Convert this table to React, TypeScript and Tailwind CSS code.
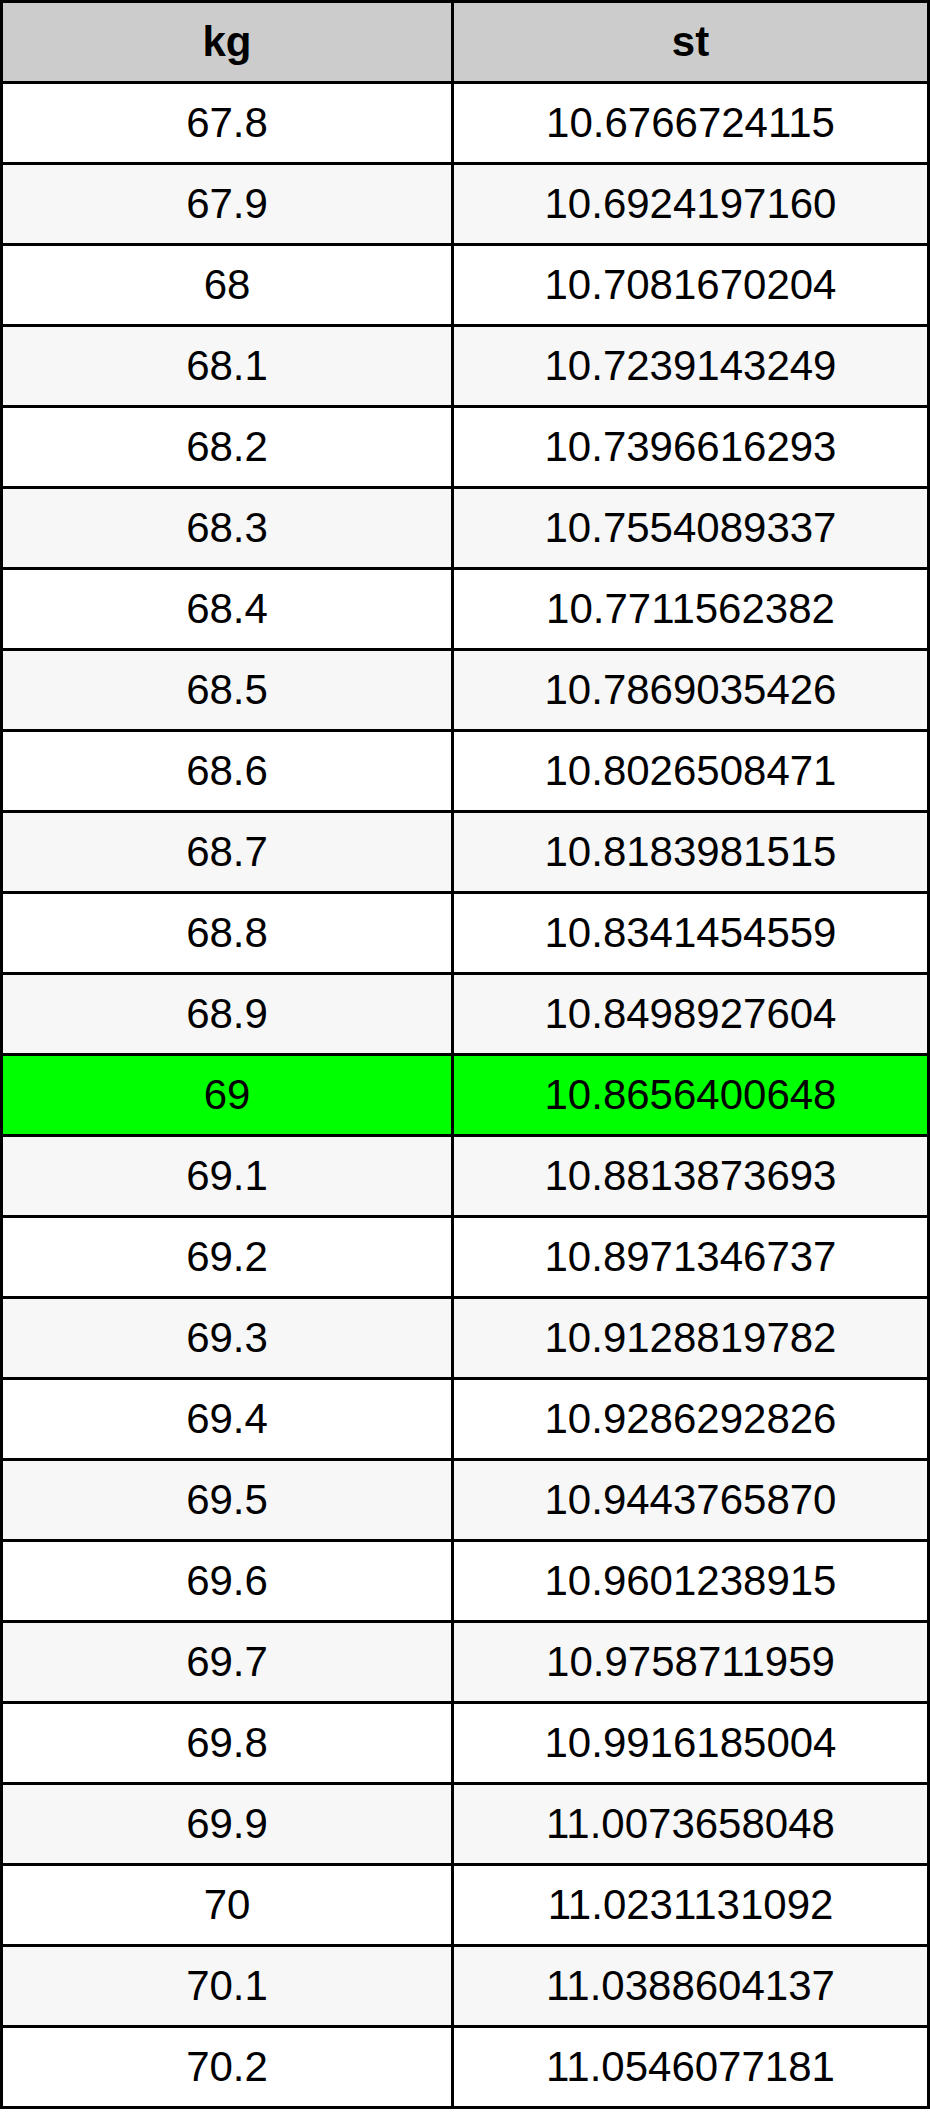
import React from "react";

const ROWS: [string, string][] = [
  ["67.8", "10.6766724115"],
  ["67.9", "10.6924197160"],
  ["68", "10.7081670204"],
  ["68.1", "10.7239143249"],
  ["68.2", "10.7396616293"],
  ["68.3", "10.7554089337"],
  ["68.4", "10.7711562382"],
  ["68.5", "10.7869035426"],
  ["68.6", "10.8026508471"],
  ["68.7", "10.8183981515"],
  ["68.8", "10.8341454559"],
  ["68.9", "10.8498927604"],
  ["69", "10.8656400648"],
  ["69.1", "10.8813873693"],
  ["69.2", "10.8971346737"],
  ["69.3", "10.9128819782"],
  ["69.4", "10.9286292826"],
  ["69.5", "10.9443765870"],
  ["69.6", "10.9601238915"],
  ["69.7", "10.9758711959"],
  ["69.8", "10.9916185004"],
  ["69.9", "11.0073658048"],
  ["70", "11.0231131092"],
  ["70.1", "11.0388604137"],
  ["70.2", "11.0546077181"],
];

const HIGHLIGHT = "69";

export default function App() {
  return (
    <div className="w-[930px] bg-white text-black font-['Liberation_Sans',Arial,sans-serif] text-[42px] leading-none">
      <div className="border-l-[3px] border-t-[3px] border-black">
        {/* Header */}
        <div className="flex h-[81px] bg-[#cccccc] font-bold">
          <div className="w-[451px] flex items-center justify-center border-r-[3px] border-b-[3px] border-black">kg</div>
          <div className="flex-1 flex items-center justify-center border-r-[3px] border-b-[3px] border-black">st</div>
        </div>

        {ROWS.map(([kg, st], i) => {
          const bg = kg === HIGHLIGHT ? "bg-[#00ff00]" : i % 2 === 0 ? "bg-white" : "bg-[#f7f7f7]";
          return (
            <div key={kg} className={`flex h-[81px] ${bg}`}>
              <div className="w-[451px] flex items-center justify-center border-r-[3px] border-b-[3px] border-black">{kg}</div>
              <div className="flex-1 flex items-center justify-center border-r-[3px] border-b-[3px] border-black">{st}</div>
            </div>
          );
        })}
      </div>
    </div>
  );
}
